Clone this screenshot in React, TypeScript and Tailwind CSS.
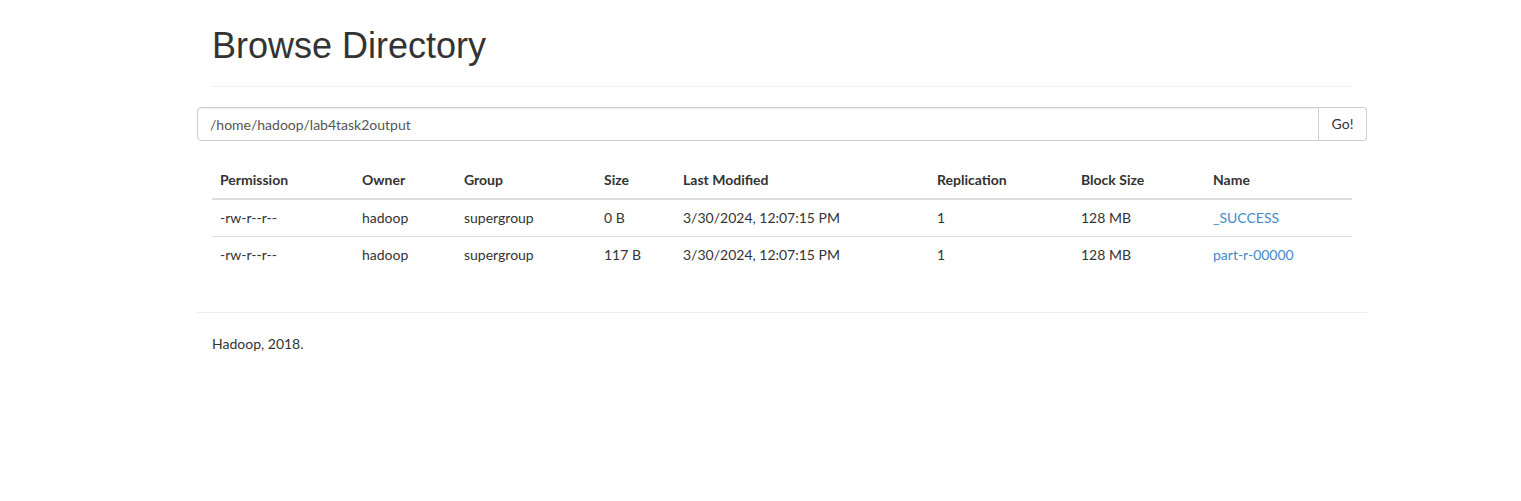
const rows = [
  { perm: "-rw-r--r--", owner: "hadoop", group: "supergroup", size: "0 B", modified: "3/30/2024, 12:07:15 PM", repl: "1", block: "128 MB", name: "_SUCCESS" },
  { perm: "-rw-r--r--", owner: "hadoop", group: "supergroup", size: "117 B", modified: "3/30/2024, 12:07:15 PM", repl: "1", block: "128 MB", name: "part-r-00000" },
];

const cols = [
  { label: "Permission", w: "w-[142px]" },
  { label: "Owner", w: "w-[102px]" },
  { label: "Group", w: "w-[140px]" },
  { label: "Size", w: "w-[79px]" },
  { label: "Last Modified", w: "w-[254px]" },
  { label: "Replication", w: "w-[144px]" },
  { label: "Block Size", w: "w-[132px]" },
  { label: "Name", w: "w-[147px]" },
];

function App() {
  return (
    <div className="min-h-[501px] bg-white text-[#333] text-[14px] leading-5 font-['Lato',sans-serif]">
      <div className="w-[1170px] ml-[197px]">
        <div className="mx-[15px] pt-[26px] pb-[20px] border-b border-[#eee]">
          <h1 className="text-[36px] leading-[40px] font-['Liberation_Sans',Arial,sans-serif] font-normal">
            Browse Directory
          </h1>
        </div>

        <div className="mt-5 flex h-[34px]">
          <input
            className="flex-1 h-full border border-[#ccc] rounded-l px-3 text-[14px] text-[#555] outline-none shadow-[inset_0_1px_1px_rgba(0,0,0,0.075)]"
            defaultValue="/home/hadoop/lab4task2output"
          />
          <button className="w-[48px] h-full border border-l-0 border-[#ccc] rounded-r bg-white text-[14px] text-[#333]">
            Go!
          </button>
        </div>

        <table className="mt-[21px] mx-[15px] w-[1140px] border-collapse table-fixed">
          <thead>
            <tr>
              {cols.map((c) => (
                <th key={c.label} className={`${c.w} text-left font-bold p-2 border-b-2 border-[#ddd]`}>
                  {c.label}
                </th>
              ))}
            </tr>
          </thead>
          <tbody>
            {rows.map((r) => (
              <tr key={r.name}>
                <td className="p-2 border-t border-[#ddd]">{r.perm}</td>
                <td className="p-2 border-t border-[#ddd]">{r.owner}</td>
                <td className="p-2 border-t border-[#ddd]">{r.group}</td>
                <td className="p-2 border-t border-[#ddd]">{r.size}</td>
                <td className="p-2 border-t border-[#ddd]">{r.modified}</td>
                <td className="p-2 border-t border-[#ddd]">{r.repl}</td>
                <td className="p-2 border-t border-[#ddd]">{r.block}</td>
                <td className="p-2 border-t border-[#ddd]">
                  <a href="#" className="text-[#428bca]">{r.name}</a>
                </td>
              </tr>
            ))}
          </tbody>
        </table>

        <div className="mt-[39px] border-t border-[#eee] pt-[21px] px-[15px]">
          <p>Hadoop, 2018.</p>
        </div>
      </div>
    </div>
  );
}

export default App;
